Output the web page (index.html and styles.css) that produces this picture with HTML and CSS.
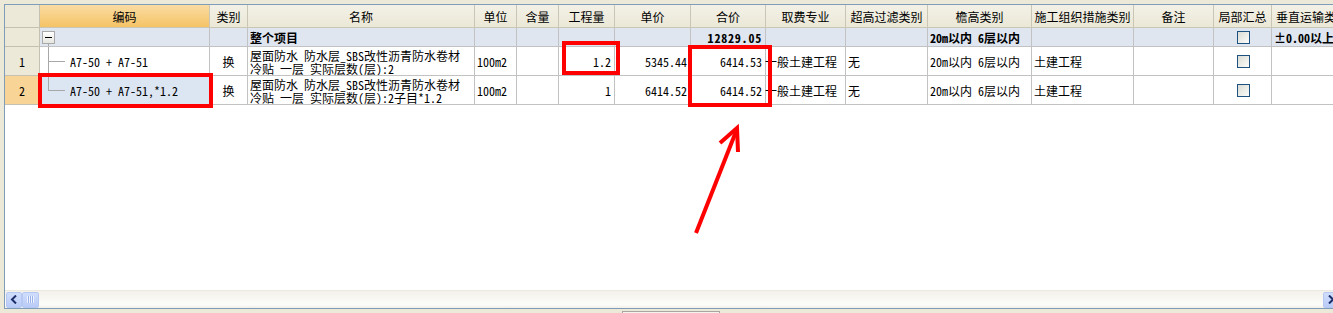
FILE: index.html
```html
<!DOCTYPE html>
<html lang="zh-CN">
<head>
<meta charset="utf-8">
<title>Grid</title>
<link rel="stylesheet" href="styles.css">
</head>
<body>
<div class="frame">
  <div class="grid">
    <div class="c rh hd"></div>
    <div class="c hd hd-sel">编码</div>
    <div class="c hd">类别</div>
    <div class="c hd">名称</div>
    <div class="c hd">单位</div>
    <div class="c hd">含量</div>
    <div class="c hd">工程量</div>
    <div class="c hd">单价</div>
    <div class="c hd">合价</div>
    <div class="c hd">取费专业</div>
    <div class="c hd">超高过滤类别</div>
    <div class="c hd">檐高类别</div>
    <div class="c hd">施工组织措施类别</div>
    <div class="c hd">备注</div>
    <div class="c hd">局部汇总</div>
    <div class="c hd hd-l">垂直运输类别</div>

    <div class="c rh sum"></div>
    <div class="c sum code"><span class="minus"></span></div>
    <div class="c sum"></div>
    <div class="c sum b l">整个项目</div>
    <div class="c sum"></div>
    <div class="c sum"></div>
    <div class="c sum"></div>
    <div class="c sum"></div>
    <div class="c sum b bn r">12829.05</div>
    <div class="c sum"></div>
    <div class="c sum"></div>
    <div class="c sum b l">20m以内 6层以内</div>
    <div class="c sum"></div>
    <div class="c sum"></div>
    <div class="c sum ctr"><span class="chk"></span></div>
    <div class="c sum b l">±0.00以上</div>

    <div class="c rh num">1</div>
    <div class="c code mid"><span class="branch"></span>A7-50 + A7-51</div>
    <div class="c ctr">换</div>
    <div class="c l two"><span class="ln">屋面防水 防水层_SBS改性沥青防水卷材</span><span class="ln">冷贴 一层 实际层数(层):2</span></div>
    <div class="c l">100m2</div>
    <div class="c"></div>
    <div class="c r">1.2</div>
    <div class="c r">5345.44</div>
    <div class="c r">6414.53</div>
    <div class="c l tight">一般土建工程</div>
    <div class="c l">无</div>
    <div class="c l">20m以内 6层以内</div>
    <div class="c l">土建工程</div>
    <div class="c"></div>
    <div class="c ctr"><span class="chk"></span></div>
    <div class="c"></div>

    <div class="c rh num rh-sel">2</div>
    <div class="c code last sel"><span class="branch"></span>A7-50 + A7-51,*1.2</div>
    <div class="c ctr">换</div>
    <div class="c l two"><span class="ln">屋面防水 防水层_SBS改性沥青防水卷材</span><span class="ln">冷贴 一层 实际层数(层):2子目*1.2</span></div>
    <div class="c l">100m2</div>
    <div class="c"></div>
    <div class="c r">1</div>
    <div class="c r">6414.52</div>
    <div class="c r">6414.52</div>
    <div class="c l tight">一般土建工程</div>
    <div class="c l">无</div>
    <div class="c l">20m以内 6层以内</div>
    <div class="c l">土建工程</div>
    <div class="c"></div>
    <div class="c ctr"><span class="chk"></span></div>
    <div class="c"></div>
  </div>
  <div class="filler"></div>
  <div class="hscroll">
    <span class="sbtn left"><svg width="8" height="9" viewBox="0 0 8 9"><path d="M6 0.5 L2 4.5 L6 8.5" fill="none" stroke="#1d2f6b" stroke-width="2"/></svg></span>
    <span class="thumb"><span class="grip"></span></span>
    <span class="track"></span>
    <span class="sbtn right"><svg width="8" height="9" viewBox="0 0 8 9"><path d="M2 0.5 L6 4.5 L2 8.5" fill="none" stroke="#1d2f6b" stroke-width="2"/></svg></span>
  </div>
</div>
<div class="bottom"><span class="splitter"></span></div>

<svg class="marks" width="1333" height="313" viewBox="0 0 1333 313">
  <g fill="none" stroke="#ff0000" stroke-width="4">
    <rect x="40" y="75" width="171" height="31"/>
    <rect x="564" y="43" width="54" height="30"/>
    <rect x="690" y="47" width="80" height="58"/>
    <path d="M696 233 L737 129"/>
    <path d="M720 143 L737 128 L738 152" stroke-linejoin="miter"/>
  </g>
</svg>
</body>
</html>
```

FILE: styles.css
```css
html, body {
  margin: 0;
  padding: 0;
  background: #ece9d8;
  width: 1333px;
  height: 313px;
  overflow: hidden;
  font-family: "Noto Sans Mono CJK SC", "Noto Sans CJK SC", monospace;
  font-size: 12px;
  color: #000;
}

.frame {
  margin: 4px 0 0 4px;
  width: 1345px;
  height: 303px;
  border: 1px solid #7f9db9;
  border-right: none;
  background: #fff;
  display: flex;
  flex-direction: column;
}

.grid {
  display: grid;
  grid-template-columns: 35px 170px 38px 227px 42px 42px 56px 76px 75px 80px 82px 104px 102px 80px 58px 110px;
  grid-template-rows: 23px 19px 29px 29px;
}

.c {
  box-sizing: border-box;
  border-right: 1px solid #c2c2c2;
  border-bottom: 1px solid #c2c2c2;
  display: flex;
  align-items: center;
  white-space: nowrap;
  overflow: hidden;
  line-height: 13px;
  position: relative;
}

.hd {
  justify-content: center;
  background: linear-gradient(#f3f1e7, #ebe8d7);
  border-right-color: #c9c6b5;
  border-bottom-color: #c9c6b5;
  color: #000;
}
.hd-l { justify-content: flex-start; padding-left: 4px; }
.hd-sel { background: linear-gradient(#fadca2, #f5c366); }

.rh { background: #ece9d8; border-right-color: #c4c1b2; border-bottom-color: #c4c1b2; }
.rh.hd { background: #ece9d8; }
.num { padding-left: 14px; }
.rh-sel { background: #f8d597; }

.sum { background: #dfe6f0; }
.sum.rh { background: #ece9d8; }
.b { font-weight: bold; }
.bn { letter-spacing: 0.8px; }
.l { padding-left: 2px; }
.r { justify-content: flex-end; padding-right: 3px; }
.ctr { justify-content: center; }
.tight { padding-left: 0; margin-left: -1px; }
.two {
  flex-direction: column;
  align-items: flex-start;
  justify-content: center;
  padding-top: 1px;
}
.ln { display: block; height: 13px; line-height: 13px; }

.sel { background: #dce5f2; }

.code { padding-left: 8px; }
.minus {
  box-sizing: border-box;
  width: 13px;
  height: 13px;
  margin-left: -6px;
  margin-top: 1px;
  border: 1px solid #a9a9a9;
  background: linear-gradient(#ffffff, #e6e6e0);
  position: relative;
}
.minus::after {
  content: "";
  position: absolute;
  left: 2px;
  top: 5px;
  width: 7px;
  height: 1px;
  background: #000;
}
.sum.code::after {
  content: "";
  position: absolute;
  left: 8px;
  top: 15px;
  bottom: -1px;
  width: 1px;
  background: #a8a8a8;
}
.mid::before, .last::before {
  content: "";
  position: absolute;
  left: 8px;
  top: -1px;
  width: 1px;
  background: #a8a8a8;
}
.mid::before { bottom: -1px; }
.last::before { height: 15px; }
.branch {
  display: inline-block;
  width: 17px;
  height: 1px;
  background: #a8a8a8;
  margin-right: 5px;
}

.chk {
  box-sizing: border-box;
  width: 13px;
  height: 13px;
  border: 1px solid #1c5180;
  background: linear-gradient(135deg, #dcdcd6, #fbfbf9);
  margin-left: 1px;
}

.filler { flex: 1; background: #fff; }

.hscroll {
  height: 18px;
  box-sizing: border-box;
  border-top: 1px solid #ebe9e0;
  background: linear-gradient(#f3f1ea, #fcfcfa 80%, #f1efe6);
  display: flex;
  align-items: center;
  padding-left: 1px;
}
.sbtn, .thumb {
  box-sizing: border-box;
  height: 16px;
  border: 1px solid #b6c8f2;
  border-radius: 2px;
  background: linear-gradient(#d0ddfc, #b9cbf7);
  display: flex;
  align-items: center;
  justify-content: center;
}
.sbtn { width: 16px; }
.thumb { width: 17px; }
.grip {
  width: 7px;
  height: 7px;
  background: repeating-linear-gradient(90deg, #eef3ff 0 1px, #9cb3ea 1px 2px);
}
.track { flex: 0 0 1284px; }

.bottom {
  height: 5px;
  display: flex;
  padding-left: 622px;
}
.splitter {
  margin-top: 2px;
  width: 98px;
  height: 4px;
  box-sizing: border-box;
  border: 1px solid #a7a6a0;
  border-bottom: none;
  background: #f4f3ee;
}

.marks {
  position: absolute;
  left: 0;
  top: 0;
  pointer-events: none;
}
```
